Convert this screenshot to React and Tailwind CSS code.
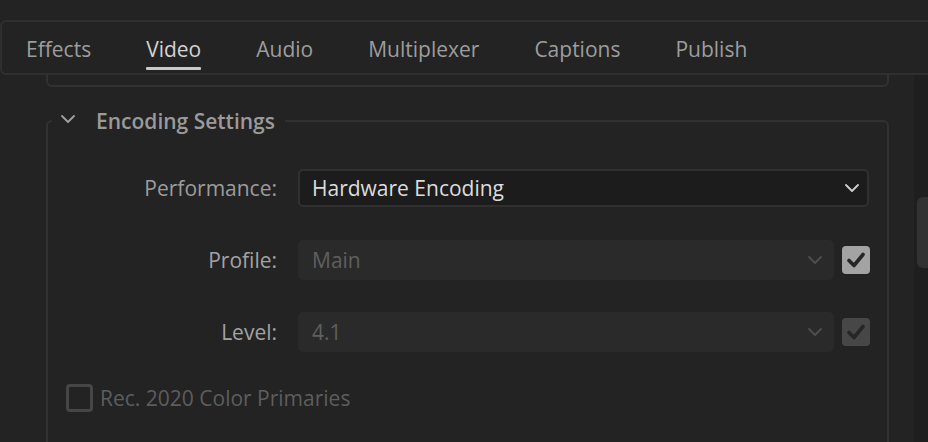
import React from "react";

const font = { fontFamily: '"Open Sans", "Noto Sans", sans-serif' };

function Chevron({ className }) {
  return (
    <svg width="16" height="10" viewBox="0 0 16 10" className={className} fill="none">
      <path d="M2 2 L8 8 L14 2" stroke="currentColor" strokeWidth="1.8" strokeLinecap="round" strokeLinejoin="round" />
    </svg>
  );
}

function Check({ className }) {
  return (
    <svg width="20" height="18" viewBox="0 0 20 18" className={className} fill="none">
      <path d="M3 9.5 L8 14.5 L17 3.5" stroke="currentColor" strokeWidth="3.6" strokeLinecap="round" strokeLinejoin="round" />
    </svg>
  );
}

const tabs = ["Effects", "Video", "Audio", "Multiplexer", "Captions", "Publish"];

export default function App() {
  return (
    <div
      className="w-[928px] h-[442px] overflow-hidden bg-[#232323] flex flex-col"
      style={font}
    >
      <div className="h-[20px] shrink-0" />
      {/* Tab bar */}
      <div className="w-[960px] h-[55px] shrink-0 border-2 border-[#2f2f2f] rounded-l-[6px] flex items-stretch pl-[24px] gap-[55px]">
        {tabs.map((t) => (
          <div key={t} className="relative flex items-center pt-[3px]">
            <span
              className={
                "text-[21px] leading-none " +
                (t === "Video" ? "text-[#d2d2d2]" : "text-[#9d9d9d]")
              }
            >
              {t}
            </span>
            {t === "Video" && (
              <div className="absolute left-0 right-0 bottom-[3px] h-[3px] bg-[#c9c9c9] rounded-[1px]" />
            )}
          </div>
        ))}
      </div>

      {/* Body */}
      <div className="flex flex-1 min-h-0">
        <div className="flex-1 min-w-0">
          {/* previous section bottom */}
          <div className="ml-[46px] w-[843px] h-[12px] border-2 border-t-0 border-[#313131] rounded-b-[6px]" />

          <fieldset className="mt-[20px] ml-[46px] w-[843px] border-2 border-[#313131] rounded-[6px] pb-[40px]">
            <legend className="ml-[4px] px-[8px] h-[28px] flex items-center">
              <Chevron className="text-[#a0a0a0] mr-[20px] -mt-[4px]" />
              <span className="text-[21px] font-semibold text-[#9a9a9a] leading-none pr-[2px]">
                Encoding Settings
              </span>
            </legend>

            {/* Performance */}
            <div className="flex items-center mt-[34px] h-[38px]">
              <div className="w-[229px] text-right text-[21px] text-[#9c9c9c] leading-none">Performance:</div>
              <div className="ml-[21px] w-[571px] h-[38px] bg-[#1c1c1c] border-2 border-[#303030] rounded-[5px] flex items-center justify-between pl-[12px] pr-[7px]">
                <span className="text-[21px] text-[#dcdcdc] leading-none">Hardware Encoding</span>
                <Chevron className="text-[#d0d0d0]" />
              </div>
            </div>

            {/* Profile */}
            <div className="flex items-center mt-[33px] h-[40px]">
              <div className="w-[229px] text-right text-[21px] text-[#a2a2a2] leading-none">Profile:</div>
              <div className="ml-[21px] w-[536px] h-[40px] bg-[#2a2a2a] rounded-[5px] flex items-center justify-between pl-[14px] pr-[11px]">
                <span className="text-[21px] text-[#5f5f5f] leading-none">Main</span>
                <Chevron className="text-[#4e4e4e]" />
              </div>
              <div className="ml-[8px] w-[28px] h-[28px] bg-[#a3a3a3] rounded-[4px] flex items-center justify-center">
                <Check className="text-[#262626]" />
              </div>
            </div>

            {/* Level */}
            <div className="flex items-center mt-[32px] h-[40px]">
              <div className="w-[229px] text-right text-[21px] text-[#a2a2a2] leading-none">Level:</div>
              <div className="ml-[21px] w-[536px] h-[40px] bg-[#2a2a2a] rounded-[5px] flex items-center justify-between pl-[14px] pr-[11px]">
                <span className="text-[21px] text-[#5f5f5f] leading-none">4.1</span>
                <Chevron className="text-[#4e4e4e]" />
              </div>
              <div className="ml-[8px] w-[28px] h-[28px] bg-[#474747] rounded-[4px] flex items-center justify-center">
                <Check className="text-[#262626]" />
              </div>
            </div>

            {/* Rec 2020 */}
            <div className="flex items-center mt-[32px] ml-[18px] h-[28px]">
              <div className="w-[27px] h-[28px] border-[3px] border-[#464646] rounded-[4px]" />
              <span className="ml-[7px] text-[21px] text-[#5d5d5d] leading-none">Rec. 2020 Color Primaries</span>
            </div>
          </fieldset>
        </div>

        {/* Scrollbar */}
        <div className="w-[14px] shrink-0 bg-[#1f1f1f] pt-[122px] pl-[3px]">
          <div className="w-[11px] h-[71px] bg-[#323232] rounded-l-[6px]" />
        </div>
      </div>
    </div>
  );
}
